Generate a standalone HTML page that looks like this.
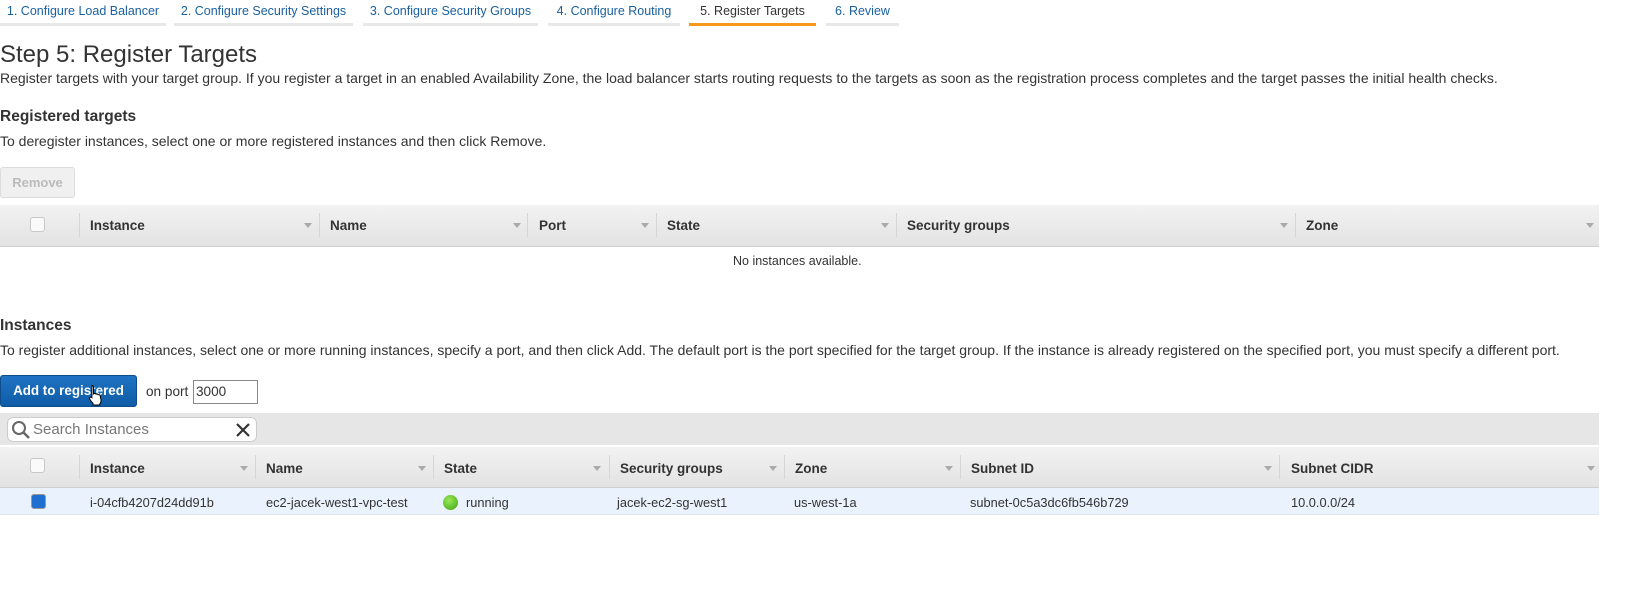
<!DOCTYPE html>
<html><head><meta charset="utf-8"><style>
*{box-sizing:border-box;margin:0;padding:0}
body{width:1627px;height:593px;background:#fff;font-family:"Liberation Sans",Arial,sans-serif;color:#333;position:relative;overflow:hidden;font-size:13px}
.a{position:absolute;white-space:nowrap}
.tab{position:absolute;top:0;height:26px;border-bottom:3px solid #e8e8e8;color:#1a5f9e;font-size:12.5px;padding-top:4px;text-align:center}
.tab.on{border-bottom-color:#f7981d;color:#333}
.hdr{position:absolute;left:0;width:1599px;background:linear-gradient(#f2f2f2,#e3e3e3);border-bottom:1px solid #cfcfcf}
.th{position:absolute;font-weight:bold;font-size:13.5px;color:#333}
.sep{position:absolute;width:1px;background:#d6d6d6}
.arr{position:absolute;width:0;height:0;border-left:4px solid transparent;border-right:4px solid transparent;border-top:5px solid #aaa}
.cb{position:absolute;width:15px;height:15px;border:1px solid #c8c8c8;border-radius:3px;background:#fafafa}
.td{position:absolute;top:495px;font-size:12.8px}
</style></head><body>
<div class="tab" style="left:0;width:166px">1. Configure Load Balancer</div>
<div class="tab" style="left:174px;width:179px">2. Configure Security Settings</div>
<div class="tab" style="left:363px;width:175px">3. Configure Security Groups</div>
<div class="tab" style="left:548px;width:132px">4. Configure Routing</div>
<div class="tab on" style="left:689px;width:127px">5. Register Targets</div>
<div class="tab" style="left:826px;width:73px">6. Review</div>

<div class="a" style="left:0;top:41px;font-size:24px;color:#333">Step 5: Register Targets</div>
<div class="a" style="left:0;top:70px;font-size:14px">Register targets with your target group. If you register a target in an enabled Availability Zone, the load balancer starts routing requests to the targets as soon as the registration process completes and the target passes the initial health checks.</div>
<div class="a" style="left:0;top:108px;font-size:15.5px;font-weight:bold">Registered targets</div>
<div class="a" style="left:0;top:133px;font-size:14px">To deregister instances, select one or more registered instances and then click Remove.</div>
<div class="a" style="left:0;top:167px;width:75px;height:31px;border:1px solid #ddd;border-radius:3px;background:#f0f0f0;color:#bbb;font-weight:bold;font-size:13px;text-align:center;line-height:29px">Remove</div>

<div class="hdr" style="top:205px;height:42px"></div>
<div class="cb" style="left:30px;top:217px"></div>
<div class="sep" style="left:79px;top:213px;height:24px"></div>
<div class="th" style="left:90px;top:218px">Instance</div><div class="arr" style="left:304px;top:223px"></div>
<div class="sep" style="left:319px;top:213px;height:24px"></div>
<div class="th" style="left:330px;top:218px">Name</div><div class="arr" style="left:513px;top:223px"></div>
<div class="sep" style="left:527px;top:213px;height:24px"></div>
<div class="th" style="left:539px;top:218px">Port</div><div class="arr" style="left:641px;top:223px"></div>
<div class="sep" style="left:656px;top:213px;height:24px"></div>
<div class="th" style="left:667px;top:218px">State</div><div class="arr" style="left:881px;top:223px"></div>
<div class="sep" style="left:896px;top:213px;height:24px"></div>
<div class="th" style="left:907px;top:218px">Security groups</div><div class="arr" style="left:1280px;top:223px"></div>
<div class="sep" style="left:1295px;top:213px;height:24px"></div>
<div class="th" style="left:1306px;top:218px">Zone</div><div class="arr" style="left:1586px;top:223px"></div>
<div class="a" style="left:733px;top:254px;font-size:12.5px">No instances available.</div>

<div class="a" style="left:0;top:317px;font-size:15.5px;font-weight:bold">Instances</div>
<div class="a" style="left:0;top:342px;font-size:14px">To register additional instances, select one or more running instances, specify a port, and then click Add. The default port is the port specified for the target group. If the instance is already registered on the specified port, you must specify a different port.</div>
<div class="a" style="left:0;top:375px;width:137px;height:32px;border:1px solid #0f4d8a;border-radius:3px;background:linear-gradient(#1e73c2,#105ca7);color:#fff;font-weight:bold;font-size:13.4px;text-align:center;line-height:30px">Add to registered</div>
<svg class="a" style="left:88px;top:384px" width="16" height="22" viewBox="0 0 16 22"><path d="M4 1.5c.9 0 1.5.6 1.5 1.5v7l.5-.4c.8-.5 1.8-.2 2.1.6.8-.5 1.8-.2 2.1.6.8-.4 1.8 0 2 .9l.8 4.3c.2 1.6-.3 3-1.3 4.1V21H5v-1.7c-1.1-1.1-2.4-2.6-3.2-4.1-.5-.9-.2-1.9.7-2.1.5-.1 1 .1 1.4.5V3c0-.9.2-1.5 1.1-1.5z" fill="#fff" stroke="#000" stroke-width="1"/></svg>
<div class="a" style="left:146px;top:384px;font-size:13.6px">on port</div>
<div class="a" style="left:193px;top:380px;width:65px;height:24px;border:1px solid #888;font-size:13.6px;padding:3px 2px">3000</div>

<div class="a" style="left:0;top:413px;width:1599px;height:33px;background:#e6e6e6;border-bottom:1px solid #fff"></div>
<div class="a" style="left:7px;top:417px;width:250px;height:25px;border:1px solid #ccc;border-radius:6px;background:#fff"></div>
<svg class="a" style="left:11px;top:420px" width="20" height="20" viewBox="0 0 20 20"><circle cx="8" cy="8" r="6" fill="none" stroke="#666" stroke-width="2"/><line x1="12.5" y1="12.5" x2="18" y2="18" stroke="#666" stroke-width="2.5"/></svg>
<div class="a" style="left:33px;top:421px;font-size:15px;color:#777">Search Instances</div>
<svg class="a" style="left:235px;top:422px" width="16" height="16" viewBox="0 0 16 16"><path d="M2 2L14 14M14 2L2 14" stroke="#333" stroke-width="2.2"/></svg>

<div class="hdr" style="top:447px;height:41px"></div>
<div class="cb" style="left:30px;top:458px"></div>
<div class="sep" style="left:79px;top:455px;height:24px"></div>
<div class="th" style="left:90px;top:461px">Instance</div><div class="arr" style="left:240px;top:466px"></div>
<div class="sep" style="left:255px;top:455px;height:24px"></div>
<div class="th" style="left:266px;top:461px">Name</div><div class="arr" style="left:418px;top:466px"></div>
<div class="sep" style="left:433px;top:455px;height:24px"></div>
<div class="th" style="left:444px;top:461px">State</div><div class="arr" style="left:593px;top:466px"></div>
<div class="sep" style="left:609px;top:455px;height:24px"></div>
<div class="th" style="left:620px;top:461px">Security groups</div><div class="arr" style="left:769px;top:466px"></div>
<div class="sep" style="left:784px;top:455px;height:24px"></div>
<div class="th" style="left:795px;top:461px">Zone</div><div class="arr" style="left:945px;top:466px"></div>
<div class="sep" style="left:960px;top:455px;height:24px"></div>
<div class="th" style="left:971px;top:461px">Subnet ID</div><div class="arr" style="left:1264px;top:466px"></div>
<div class="sep" style="left:1279px;top:455px;height:24px"></div>
<div class="th" style="left:1291px;top:461px">Subnet CIDR</div><div class="arr" style="left:1587px;top:466px"></div>

<div class="a" style="left:0;top:488px;width:1599px;height:27px;background:#eaf3fd;border-bottom:1px solid #dde6ee"></div>
<div class="a" style="left:31px;top:494px;width:15px;height:15px;border:1px solid #999;border-radius:3px;background:#1e6fd0"></div>
<div class="td" style="left:90px">i-04cfb4207d24dd91b</div>
<div class="td" style="left:266px">ec2-jacek-west1-vpc-test</div>
<div class="a" style="left:443px;top:495px;width:15px;height:15px;border-radius:50%;background:radial-gradient(circle at 40% 35%,#9be85a,#3aa50f)"></div>
<div class="td" style="left:466px">running</div>
<div class="td" style="left:617px">jacek-ec2-sg-west1</div>
<div class="td" style="left:794px">us-west-1a</div>
<div class="td" style="left:970px">subnet-0c5a3dc6fb546b729</div>
<div class="td" style="left:1291px">10.0.0.0/24</div>
</body></html>
